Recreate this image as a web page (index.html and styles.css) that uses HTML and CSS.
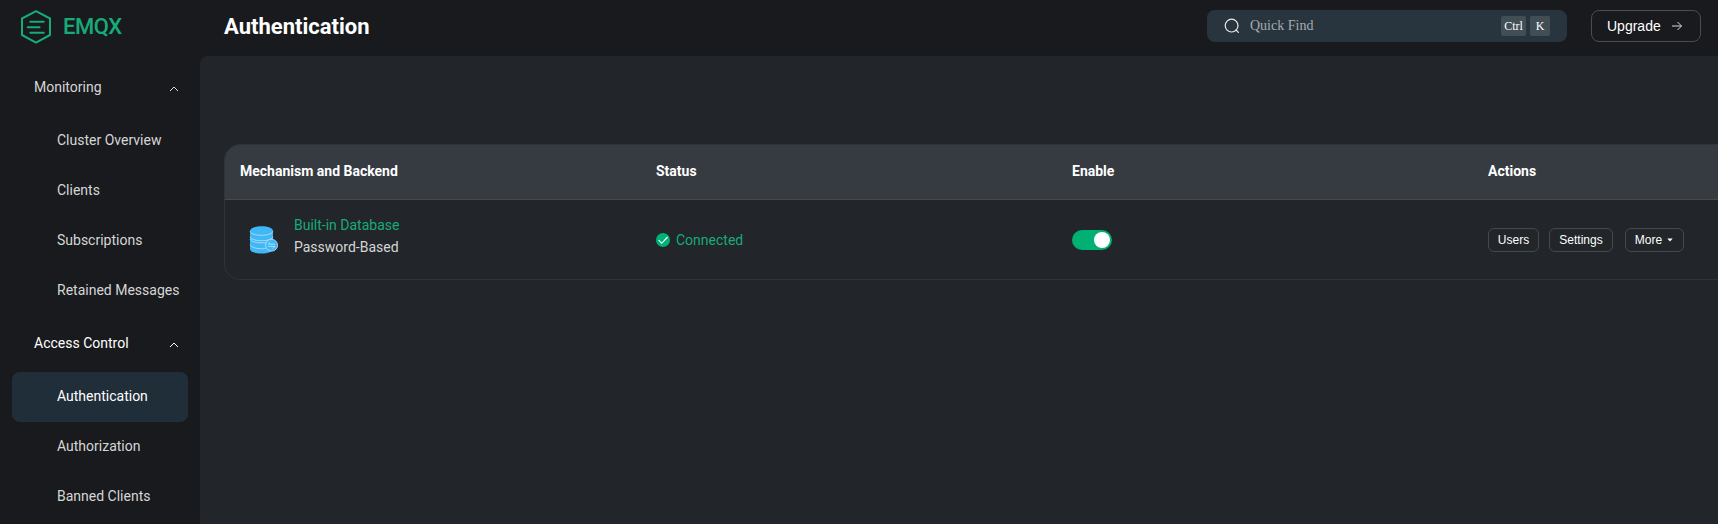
FILE: index.html
```html
<!DOCTYPE html>
<html lang="en">
<head>
<meta charset="utf-8">
<title>Authentication - EMQX</title>
<link rel="stylesheet" href="styles.css">
</head>
<body>
<div class="app">
  <aside class="sidebar">
    <div class="brand">
      <svg class="brand-mark" width="32" height="34" viewBox="0 0 32 34" fill="none" stroke="currentColor" stroke-width="2" stroke-linejoin="round" stroke-linecap="round">
        <path d="M16 1.2 L30 8.5 V25 L16 32.6 L2 25 V8.5 Z"/>
        <path d="M10.3 11.8H23.7M7.7 17.3H19.6M10.3 22.8H23.7"/>
      </svg>
      <span class="brand-name">EMQX</span>
    </div>
    <nav class="menu">
      <div class="menu-title">Monitoring
        <svg class="chevron" width="10" height="6" viewBox="0 0 10 6"><path d="M1 5 L5 1 L9 5"/></svg>
      </div>
      <a class="menu-item">Cluster Overview</a>
      <a class="menu-item">Clients</a>
      <a class="menu-item">Subscriptions</a>
      <a class="menu-item">Retained Messages</a>
      <div class="menu-title open">Access Control
        <svg class="chevron" width="10" height="6" viewBox="0 0 10 6"><path d="M1 5 L5 1 L9 5"/></svg>
      </div>
      <a class="menu-item active">Authentication</a>
      <a class="menu-item">Authorization</a>
      <a class="menu-item">Banned Clients</a>
    </nav>
  </aside>
  <div class="main">
    <header class="topbar">
      <h1 class="page-title">Authentication</h1>
      <div class="search">
        <svg class="search-icon" width="16" height="16" viewBox="0 0 16 16" fill="none" stroke="currentColor" stroke-width="1.2" stroke-linecap="round"><circle cx="7.6" cy="7.6" r="6.4"/><path d="M12 12l2.4 2.4"/></svg>
        <span class="search-text">Quick Find</span>
        <kbd class="key key-ctrl">Ctrl</kbd>
        <kbd class="key">K</kbd>
      </div>
      <button class="upgrade">Upgrade
        <svg width="12" height="10" viewBox="0 0 12 10" fill="none" stroke="#d6d7d8" stroke-width="1"><path d="M1 5H10.5M6.5 1L10.5 5L6.5 9"/></svg>
      </button>
    </header>
    <main class="content">
      <div class="table">
        <div class="row head">
          <div>Mechanism and Backend</div><div>Status</div><div>Enable</div><div>Actions</div>
        </div>
        <div class="row">
          <div class="backend">
            <svg class="db-icon" width="30" height="30" viewBox="0 0 30 30">
              <path class="db-fill" d="M1 6C1 3.2 6 1.2 12.5 1.2S24 3.2 24 6V24C24 26.5 19 28.6 12.5 28.6S1 26.5 1 24Z"/>
              <path class="db-line" d="M1 6.4C2 9 7 10.3 12.5 10.3S23 9 24 6.4M1 11.8C2 14.6 7 15.7 12.5 15.7S23 14.6 24 11.8M1 14C2 16.8 7 17.8 12.5 17.8S17 17.7 18 17M1 19.7C2 22.3 7 23.7 12.5 23.7S16 23.6 17 23.3"/>
              <circle class="db-badge" cx="22.6" cy="20.2" r="6"/>
              <path class="db-line" d="M26 19.2H19.2L21.4 17M19.2 21.4H26L23.8 23.6"/>
            </svg>
            <div class="backend-text">
              <a class="backend-name">Built-in Database</a>
              <span>Password-Based</span>
            </div>
          </div>
          <div class="status">
            <svg width="14" height="14" viewBox="0 0 14 14"><circle cx="7" cy="7" r="7" fill="#00b173"/><path d="M2.7 7.2L5.7 10.3L11.6 4" fill="none" stroke="#fff" stroke-width="1.1"/></svg>
            Connected
          </div>
          <div><span class="switch"><span class="knob"></span></span></div>
          <div class="actions">
            <button class="btn users">Users</button>
            <button class="btn settings">Settings</button>
            <button class="btn more">More
              <svg width="6" height="4" viewBox="0 0 6 4"><path d="M.3 .5H5.7L3 3.4Z" fill="currentColor"/></svg>
            </button>
          </div>
        </div>
      </div>
    </main>
  </div>
</div>
</body>
</html>
```
FILE: styles.css
```css
* { box-sizing: border-box; }
body {
  margin: 0;
  height: 524px;
  overflow: hidden;
  background: #191a1d;
  color: #d5d6d6;
  font: 14px/22px Roboto, sans-serif;
}
button { background: none; margin: 0; }
.app { display: flex; height: 524px; }

.sidebar { flex: 0 0 200px; overflow: hidden; }
.brand {
  display: flex;
  align-items: center;
  gap: 11px;
  height: 59px;
  padding: 0 0 6px 20px;
  color: #15ac77;
}
.brand-name {
  padding-top: 1px;
  font-size: 22px;
  font-weight: 500;
  letter-spacing: -.5px;
}
.menu-title {
  display: flex;
  align-items: center;
  justify-content: space-between;
  height: 56px;
  padding: 0 21px 0 34px;
}
.menu-title.open { color: #fff; }
.chevron {
  margin-top: 3px;
  fill: none;
  stroke: currentColor;
  stroke-width: 1;
}
.menu-item {
  display: flex;
  align-items: center;
  height: 50px;
  margin: 0 12px;
  padding-left: 45px;
  border-radius: 8px;
}
.menu-item.active {
  margin-top: 1px;
  margin-bottom: -1px;
  padding-bottom: 2px;
  background: #202e39;
  color: #fff;
}

.main { flex: 1; min-width: 0; display: flex; flex-direction: column; }
.topbar {
  display: flex;
  align-items: center;
  height: 56px;
  padding: 0 17px 4px 24px;
}
.page-title {
  flex: 1;
  margin: 0;
  padding-top: 2px;
  color: #fff;
  font-size: 22px;
  line-height: 28px;
  font-weight: 700;
}
.search {
  display: flex;
  align-items: center;
  width: 360px;
  height: 32px;
  margin-right: 24px;
  padding: 0 17px;
  border-radius: 8px;
  background: #28353e;
  color: #a4abb0;
  font-family: "Liberation Serif", serif;
}
.search-icon { margin-right: 10px; color: #e8eaeb; }
.search-text { flex: 1; }
.key {
  width: 20px;
  height: 20px;
  margin-left: 4px;
  border-radius: 2px;
  background: #424e55;
  color: #fff;
  font: 12px/20px "Liberation Serif", serif;
  text-align: center;
}
.key-ctrl { width: 25px; }
.upgrade {
  display: flex;
  align-items: center;
  justify-content: space-between;
  width: 110px;
  height: 32px;
  padding: 0 17px 0 15px;
  border: 1px solid #4b4c50;
  border-radius: 8px;
  color: #fff;
  font: 14px "Liberation Sans", sans-serif;
}

.content {
  flex: 1;
  overflow: hidden;
  padding: 88px 0 0 24px;
  border-top-left-radius: 8px;
  background: #222529;
}
.table {
  width: 1666px;
  border: 1px solid #303338;
  border-radius: 16px;
  overflow: hidden;
}
.row {
  display: grid;
  grid-template-columns: repeat(4, 416px);
  align-items: center;
  height: 79px;
  padding-left: 15px;
}
.row.head {
  height: 55px;
  padding-bottom: 3px;
  border-bottom: 1px solid #46494d;
  background: #363a41;
  color: #fff;
  font-weight: 700;
}
.backend { display: flex; align-items: center; gap: 15px; padding-left: 9px; }
.backend-text { display: flex; flex-direction: column; padding-bottom: 7px; }
.backend-name, .status { color: #15ac77; }
.db-fill { fill: #42b7f6; }
.db-badge { fill: #42b7f6; stroke: #c9eaff; stroke-width: .7; }
.db-line { fill: none; stroke: #d5efff; stroke-width: .65; }
.status { display: flex; align-items: center; gap: 6px; }
.switch {
  display: flex;
  justify-content: flex-end;
  width: 40px;
  height: 20px;
  padding: 2px;
  border-radius: 10px;
  background: #00b173;
}
.knob { width: 16px; height: 16px; border-radius: 50%; background: #fff; }
.actions { display: flex; }
.btn {
  display: flex;
  align-items: center;
  justify-content: center;
  height: 24px;
  padding: 0;
  border: 1px solid #46494c;
  border-radius: 6px;
  color: #fff;
  font: 12px "Liberation Sans", sans-serif;
}
.users { width: 51px; margin-right: 10px; }
.settings { width: 64px; margin-right: 12px; }
.more { width: 59px; gap: 5px; padding-right: 1px; }
```
